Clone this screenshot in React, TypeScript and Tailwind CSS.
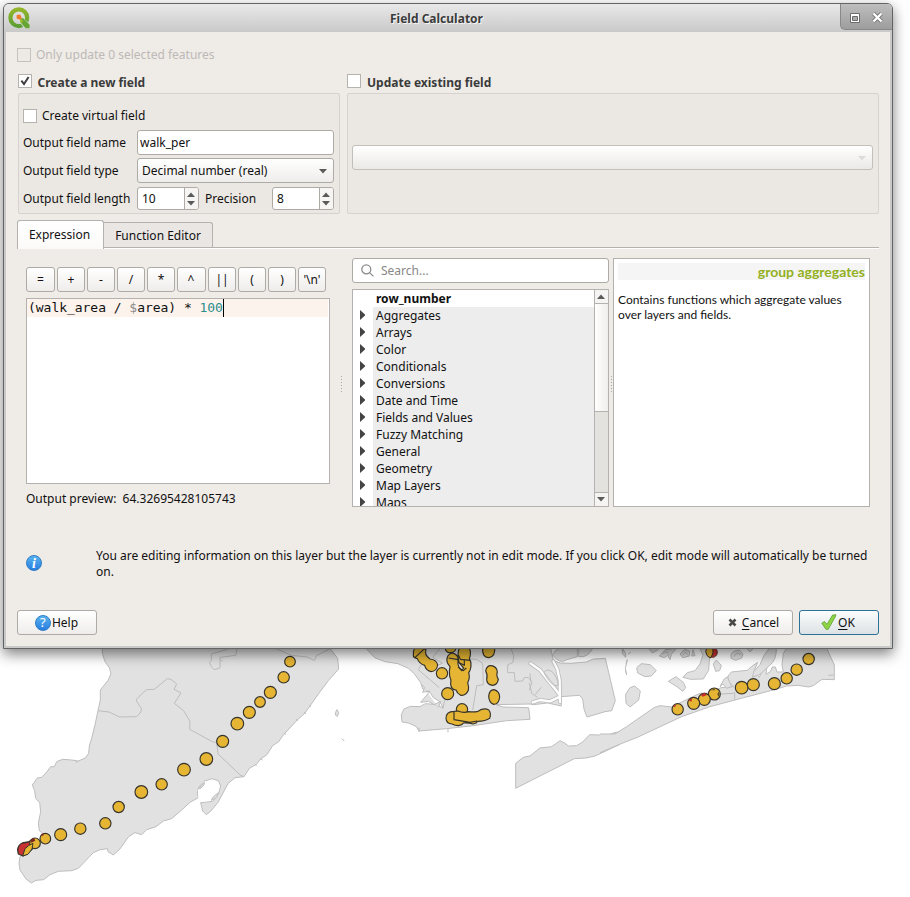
import React from 'react';

const OPERATORS = ['=', '+', '-', '/', '*', '^', '||', '(', ')', "'\\n'"];

const GROUPS = [
  'Aggregates', 'Arrays', 'Color', 'Conditionals', 'Conversions', 'Date and Time',
  'Fields and Values', 'Fuzzy Matching', 'General', 'Geometry', 'Map Layers', 'Maps',
];

const BUTTON = 'flex items-center justify-center rounded-[3px] border border-[#aeaaa6] bg-linear-to-b from-white to-[#efedeb]';

type Dot = [number, number, number];

const WEST_DOTS: Dot[] = [
  [870, 65, 16], [851, 112, 17], [811, 157, 18], [780, 186, 16], [748, 217, 18], [712, 251, 19],
  [668, 304, 18], [619, 357, 19], [552, 389, 19], [485, 433, 17], [424, 456, 19], [356, 501, 17],
  [316, 550, 17], [241, 566, 17], [182, 584, 18], [136, 596, 16], [105, 610, 16],
];

const EAST_DOTS: Dot[] = [
  [626, 57, 17], [590, 89, 17], [560, 115, 17], [523, 131, 18], [425, 143, 19], [460, 134, 18],
  [343, 162, 18], [313, 178, 18], [281, 190, 18], [233, 208, 17],
];

const CHANNELS = 'M571 70 600 90 625 122 648 150 659 166M655 172 630 184 600 180 578 187M640 64 652 88 659 120 660 186';

function Dots({ items }: { items: Dot[] }) {
  return (
    <g fill="#e5b533" stroke="#35332b" strokeWidth="3.5">
      {items.map(([cx, cy, r]) => <circle key={`${cx}-${cy}`} cx={cx} cy={cy} r={r} />)}
    </g>
  );
}

function MapCanvas() {
  return (
    <svg className="absolute inset-0" width="910" height="897" viewBox="0 0 910 897" strokeLinejoin="round">
      <g transform="translate(0 640) scale(.33333)" fill="#e1e1e1" stroke="#bdbdbd" strokeWidth="3">
        <path d="M307 0V40L315 65 328 83 333 100 325 120 301 150V180L294 212 285 255 275 295 268 318 266 340 256 354 235 363 215 360 188 358 170 365 163 380 152 380 140 396 125 412 112 414 97 435 104 452 107 475 119 488 122 515 115 550 118 572 125 578 136 596 105 612 60 650 57 670 60 690 78 717 94 729 108 721 131 719 150 704 175 694 215 692 235 685 258 661 280 638 300 629 322 626 324 635 340 645 358 629 386 590 405 578 425 584 440 569 468 560 490 543 515 536 545 510 570 487 595 473 592 460 596 442 612 424 635 416 655 422 662 438 656 460 638 484 602 488 608 513 619 524 632 514 654 487 684 431 705 413 732 410 748 385 768 374 783 356 800 345 818 317 836 305 850 285 892 240 915 219 930 198 958 158 985 122 1016 87 1013 55 990 25 970 0Z" />
        <path fill="white" stroke="none" d="M595 475 594 450 614 425 640 419 659 438 650 465 636 482 602 486Z" />
        <path d="M597 446 604 436 614 428 610 438 600 446ZM634 481 640 470 655 458 650 472Z" />
        <path fill="none" d="M294 212 327 216 359 231 410 230 423 216 424 205 410 184 409 178 427 160 440 149 463 148 502 116 513 118 530 132 522 148 543 159 523 190 551 212 570 244 569 268 637 305 650 308 654 342 706 391 720 405 732 410M711 27 707 46 660 52 660 84 642 89 634 80 628 67 634 62 634 42 682 28M828 26 874 46 922 51 943 62 949 47 990 26" />
        <path d="M1006 218 1011 209 1016 218 1012 229 1007 226ZM1026 296 1029 300 1033 302M663 60 668 64M888 238 894 241M928 197 932 200M913 217 918 221M853 278 857 284M782 355 787 361M766 372 770 377M226 363 232 367 237 362" />
        <path fill="#c93232" stroke="#35332b" strokeWidth="4" d="M53 630Q54 615 67 609L84 606 104 596 110 615 80 642 69 648 55 642Z" />
      </g>
      <g transform="translate(0 640) scale(.33333)">
        <Dots items={WEST_DOTS} />
        <path d="M68 648 75 626 87 616 99 610 96 627 84 643Z" fill="#e5b533" stroke="#35332b" strokeWidth="3" />
        <path d="M91 600 102 593 106 602 94 608ZM120 586 132 579 130 587Z" fill="#7d281f" />
      </g>

      <g transform="translate(340 640) scale(.33333)" fill="#e1e1e1" stroke="#bdbdbd" strokeWidth="3">
        <path d="M55 0 104 53 135 65 174 71 205 85 223 101 242 128 248 147 270 157 280 173 300 185 309 203 282 193 256 191 240 200 211 199 192 207 184 224 186 246 205 249 228 259 237 273 320 266 400 257 500 242 570 238 566 203 488 201 468 194 570 192 580 194 623 189 664 198 663 170 690 168 719 166 728 177 732 207 741 231 795 215 815 212 826 182 796 55 760 57 739 66 690 70 661 69 640 62 632 25 620 0Z" />
        <path d={CHANNELS} fill="none" stroke="#bdbdbd" strokeWidth="12" strokeLinecap="round" />
        <path d={CHANNELS} fill="none" stroke="white" strokeWidth="7" strokeLinecap="round" />
        <path d="M638 45Q643 29 661 25H712V50L680 59Q660 74 638 45ZM716 25V50Q744 54 758 25" />
        <path fill="none" d="M612 98Q620 82 640 98 660 128 653 138 632 138 612 98ZM299 27 278 52 308 70 280 80M244 74 235 89 298 143M334 141 315 178 308 207M398 210 410 137 430 134 428 70 410 58 391 57M513 25 521 47 519 67 503 75 503 98 523 98 525 124 548 123 553 112 565 113 576 125 568 151M570 100 572 125M568 128 575 160 592 172M604 142 586 163M237 263V276M324 266V277" />
        <path d="M244 133 254 142 248 157 270 153 258 168 242 187 265 184 282 194 302 184 295 202" />
        <path d="M840 275 820 279 804 286 749 284 728 306 710 317 685 318 675 310 660 302 635 320 600 324 570 348 550 352 527 370V445L703 356 738 354 765 348 840 313" />
      </g>
      <g transform="translate(340 640) scale(.33333)" fill="#e5b533" stroke="#35332b" strokeWidth="3.5">
        <path d="M220 45Q217 20 240 20L258 29Q252 45 270 57 290 59 293 75 290 94 273 95 257 90 254 76 238 72 232 56 219 53 220 45ZM225 53 251 28M315 20Q316 39 332 38 348 37 349 20ZM428 20Q425 53 447 53 467 50 464 20Z" />
        <path d="M321 55Q325 38 341 40 356 45 354 62 352 81 365 92L371 84 357 68Q351 39 358 25H388Q395 40 388 56 395 67 393 78 391 93 386 98 391 113 383 128 387 140 385 151 378 168 362 166 351 160 348 150 334 149 332 133 335 120 329 109 327 91 330 79 319 69 321 55Z" />
        <path fill="none" d="M326 54 354 59M355 45 361 58 391 61M358 68 373 76 373 61M354 81 370 92 379 84" />
        <circle cx="306" cy="100" r="17" /><circle cx="323" cy="161" r="18" />
        <path d="M437 93Q440 76 454 77 471 80 472 96 468 106 475 118 472 135 457 136 440 134 440 118 444 106 437 93ZM446 169Q448 149 462 149 478 153 479 171 477 193 461 193 447 189 446 169Z" />
        <circle cx="366" cy="208" r="17" />
        <path d="M342 214Q318 214 318 235 319 252 336 252 345 257 355 257 367 255 370 249 387 248 399 252 410 250 413 244 437 244 449 235 455 218 445 209 431 203 414 214 402 217 385 215 370 220 354 213ZM342 214V239L390 247 411 243" />
      </g>

      <g transform="translate(600 640) scale(.33333)" fill="#e1e1e1" stroke="#bdbdbd" strokeWidth="3">
        <path d="M0 282H45L80 260 162 203 180 197 214 201 247 185 300 160 330 159 363 143 401 140 385 126 384 108 394 96 442 91 454 80 473 67 462 94 478 112 494 73 488 65 500 37 512 25H680L703 75V119L666 118 640 137 626 141 594 136 560 138 520 150 420 176 330 200 245 230 112 292 66 310 0 338" />
        <path d="M110 83 124 71 151 74 169 92 154 108 135 110 113 99ZM77 163 90 143 104 138 121 153 116 180 90 201 78 190ZM205 124 228 110 250 127 257 143 248 154 231 140ZM249 112 262 98 285 92 300 72 309 45 300 27H330L326 91 310 117 272 118ZM340 72 349 60 364 76 359 92 347 94ZM393 43Q400 30 419 31L429 43 425 54 407 61 393 55ZM240 42 254 28 269 33 268 48 248 53ZM178 48 196 29 230 25 214 43 210 59 203 46 193 53ZM275 48 279 29 285 47ZM146 25 157 39 171 31 178 25ZM67 25 77 41 77 52 67 40ZM78 71 82 59 76 85 80 105 76 91M84 42 92 37M402 50 410 39 424 44M187 42 200 35 206 45M248 46 256 36 263 44M440 25 450 36 460 25" />
        <path fill="white" d="M500 86 523 25H560L550 40 546 75 550 96 531 96 526 81 517 81 512 94 498 103Z" />
        <path d="M462 94 480 74 492 46 508 25H529Q530 60 509 76L480 103 457 112ZM360 140 373 116 382 111 395 140 380 145 369 132ZM404 155V178M363 162 401 160M685 106 701 105" />
        <circle cx="337" cy="37" r="15" fill="#c93232" stroke="#5e3029" />
        <path fill="#e5b533" stroke="#35332b" d="M317 34Q320 20 335 22 345 36 331 54 319 50 317 34Z" />
      </g>
      <g transform="translate(600 640) scale(.33333)">
        <Dots items={EAST_DOTS} />
        <path d="M265 181 277 175 274 185ZM303 165 313 158 321 165 308 170ZM220 198 229 193 225 202Z" fill="#c52c2c" />
        <path d="M332 151 343 146 346 151ZM355 155Q363 163 355 170L352 162Z" fill="#625426" />
      </g>
    </svg>
  );
}

function QgisLogo() {
  return (
    <svg width="22" height="22" viewBox="0 0 22 22">
      <defs>
        <linearGradient id="ring" x1="0" y1="0" x2="0" y2="1">
          <stop offset="0" stopColor="#93b52a" />
          <stop offset="1" stopColor="#5c9f35" />
        </linearGradient>
      </defs>
      <circle cx="10.8" cy="10.7" r="8.4" fill="none" stroke="url(#ring)" strokeWidth="4.2" />
      <path d="M9.5 12.5 12.5 9.5 22 16.5V21.2H16.3Z" fill="#dfe0dc" />
      <path d="M12.2 11.2H15.2L21.6 17.5V21.2H17.6L12.2 15Z" fill="#66a534" />
      <path d="M12.2 11.2 15.2 14 13.6 16 12.2 14.6Z" fill="#a5bd2c" />
      <path d="M8.6 8 12.2 7.6 13.8 11 11.6 12.8 8.6 11.6Z" fill="#ee7b2d" />
    </svg>
  );
}

function Triangle({ className = '', up = false }: { className?: string; up?: boolean }) {
  return (
    <svg className={className} width="8" height="5" viewBox="0 0 8 5">
      <path fill="currentColor" d={up ? 'M0 5 4 .5 8 5Z' : 'M0 0H8L4 4.5Z'} />
    </svg>
  );
}

function Checkbox({ checked = false, disabled = false }: { checked?: boolean; disabled?: boolean }) {
  return (
    <span className={`flex size-3.5 shrink-0 items-center justify-center border ${disabled ? 'border-[#c6c2be] bg-[#edeae6]' : 'border-[#b6b2ae] bg-white'}`}>
      {checked && (
        <svg width="10" height="10" viewBox="0 0 10 10">
          <path d="M1.4 4.6 4 8 8.6 1" fill="none" stroke="#404040" strokeWidth="2" />
        </svg>
      )}
    </span>
  );
}

function SpinBox({ value }: { value: string }) {
  return (
    <div className="flex h-[23px] w-[62px] overflow-hidden rounded-[3px] border border-[#aeaaa6] bg-white">
      <span className="flex flex-1 items-center pl-1">{value}</span>
      <span className="flex w-3.5 flex-col items-center justify-center gap-1 border-l border-[#aeaaa6] bg-[#f6f5f3] pr-px text-[#5a5a5a]">
        <Triangle up className="shrink-0" /><Triangle className="shrink-0" />
      </span>
    </div>
  );
}

function Grip() {
  return <div className="mt-[2px] h-4 w-px bg-[repeating-linear-gradient(to_bottom,#aaa7a3_0_1px,transparent_1px_3px)]" />;
}

function NewFieldGroup() {
  return (
    <section className="w-[322px]">
      <div className="flex h-[19px] gap-[5.5px]">
        <Checkbox checked />
        <h2 className="leading-[18px] font-bold text-[#3b3b3b]">Create a new field</h2>
      </div>
      <div className="flex h-[121px] flex-col rounded-[2px] border border-[#d6d2cd] bg-[#ebe8e3] pt-3 pr-[5px] pl-1">
        <label className="mt-px flex h-[18px] items-center gap-[5px]"><Checkbox />Create virtual field</label>
        <div className="mt-[5px] flex h-[25px] items-center">
          <span className="w-[114px]">Output field name</span>
          <div className="flex h-[25px] flex-1 items-center rounded-[3px] border border-[#aeaaa6] bg-white pl-0.5">walk_per</div>
        </div>
        <div className="mt-[3px] flex h-[25px] items-center">
          <span className="w-[114px]">Output field type</span>
          <div className="flex h-[25px] flex-1 items-center justify-between rounded-[3px] border border-[#aeaaa6] bg-linear-to-b from-white to-[#efedeb] pr-1.5 pl-1">
            Decimal number (real)<Triangle className="mt-px text-[#5a5a5a]" />
          </div>
        </div>
        <div className="mt-1 flex h-[23px] items-center">
          <span className="w-[114px]">Output field length</span>
          <SpinBox value="10" />
          <span className="ml-1.5 flex-1">Precision</span>
          <SpinBox value="8" />
        </div>
      </div>
    </section>
  );
}

function UpdateFieldGroup() {
  return (
    <section className="w-[532px]">
      <div className="flex h-[19px] gap-1.5">
        <Checkbox />
        <h2 className="leading-[18px] font-bold text-[#3b3b3b]">Update existing field</h2>
      </div>
      <div className="flex h-[121px] items-center rounded-[2px] border border-[#d6d2cd] bg-[#ebe8e3] pt-2 pr-[5px] pl-1">
        <div className="flex h-[25px] flex-1 items-center justify-end rounded-[3px] border border-[#c3bfbb] bg-linear-to-b from-white to-[#ebe9e6] pr-1.5">
          <Triangle className="mt-px text-[#dedcda]" />
        </div>
      </div>
    </section>
  );
}

function ExpressionEditor() {
  return (
    <div className="w-[304px]">
      <div className="mt-[9px] flex h-[25px] w-[300px] gap-0.5">
        {OPERATORS.map((op, i) => (
          <button key={op} className={`${BUTTON} shrink-0 ${i === 0 || i === 5 ? 'w-[29px]' : 'w-7'} ${i === 5 ? 'pr-px' : ''}`}>{op}</button>
        ))}
      </div>
      <div className="mt-1.5 h-[186px] border border-[#b4b1ae] bg-white">
        <div className="mr-px flex h-[18px] items-center bg-[#fcf3ed] pl-px font-['DejaVu_Sans_Mono',monospace] text-[13px] tracking-[-0.03px] whitespace-pre">
          (walk_area / <span className="text-[#8b8b8b]">$</span>area) * <span className="text-[#2b8d8b]">100</span>
          <span className="h-[18px] w-px bg-black" />
        </div>
      </div>
      <p className="mt-1.5 leading-[17px] whitespace-pre">Output preview:  64.32695428105743</p>
    </div>
  );
}

function FunctionTree() {
  return (
    <div className="w-[257px]">
      <div className="flex h-[25px] items-center rounded-[3px] border border-[#aeaaa6] bg-white pl-2 text-[#888]">
        <svg className="-mt-px" width="13" height="13" viewBox="0 0 13 13" fill="none" stroke="#8c8c8c" strokeWidth="1.3">
          <circle cx="5.3" cy="5.3" r="4.5" /><path d="M8.6 8.6 12.4 12.4" />
        </svg>
        <span className="ml-[7px]">Search...</span>
      </div>
      <div className="mt-1.5 flex h-[218px] overflow-hidden border border-[#b4b1ae] bg-white">
        <div className="flex-1">
          <div className="h-[17px] pl-[23px] leading-[17px] font-bold">row_number</div>
          {GROUPS.map((name) => (
            <div key={name} className="flex h-[17px] items-center">
              <svg className="-mt-px ml-[7px]" width="5" height="10" viewBox="0 0 5 10"><path fill="#444" d="M0 0 5 4.6V5.4L0 10Z" /></svg>
              <span className="ml-2 h-[17px] flex-1 bg-[#ededed] pl-[3px] leading-[17px]">{name}</span>
            </div>
          ))}
        </div>
        <div className="flex w-3.5 flex-col border-l border-[#b4b1ae] bg-[#e4e2de] text-[#5a5a5a]">
          <div className="flex h-[13px] items-center justify-center bg-[#f5f4f2] pr-px"><Triangle up /></div>
          <div className="h-[109px] border-y border-[#b4b1ae] bg-linear-to-r from-white to-[#f0eeec]" />
          <div className="mt-auto flex h-3.5 items-center justify-center border-t border-[#b4b1ae] bg-[#f5f4f2] pr-px"><Triangle /></div>
        </div>
      </div>
    </div>
  );
}

function HelpPanel() {
  return (
    <div className="h-[249px] w-[257px] border border-[#b4b1ae] bg-white px-1 pt-1 font-[Lato,sans-serif] text-[12px]">
      <h3 className="h-[17px] bg-[#f5f5f5] text-right text-[14px] leading-[18px] font-bold text-[#93b023]">group aggregates</h3>
      <p className="mt-3 leading-[15px]">Contains functions which aggregate values<br />over layers and fields.</p>
    </div>
  );
}

function RoundIcon({ glyph, italic = false }: { glyph: string; italic?: boolean }) {
  return (
    <span className={`flex size-4 items-center justify-center rounded-full border border-[#2c7cc4] bg-linear-to-b from-[#59b3ee] to-[#2a7de1] text-white ${italic ? "font-['Liberation_Serif',serif] text-[14px] font-bold italic" : 'text-[13px]'}`}>
      {glyph}
    </span>
  );
}

export default function App() {
  return (
    <main className="relative h-[897px] w-[910px] overflow-hidden bg-white pt-[3px] pl-[3px] font-['Noto_Sans',sans-serif] text-[12px] text-[#111]">
      <MapCanvas />
      <div className="relative flex h-[646px] w-[890px] flex-col overflow-visible rounded-t-[6px] border border-[#626466] bg-[#c9c9c9] shadow-[0_5px_14px_rgba(0,0,0,0.5)]">
        <header className="flex h-7 shrink-0 rounded-t-[5px] bg-linear-to-b from-[#e9e9e9] to-[#c9c9c9]">
          <div className="flex w-[30px] items-center pl-1"><QgisLogo /></div>
          <h1 className="flex flex-1 items-center justify-center pt-px pr-px font-bold text-[#3c3c3c] [text-shadow:1px_1px_0_#f5f5f5]">Field Calculator</h1>
          <div className="flex h-[26px] w-[52px] items-center gap-3 rounded-tr-[5px] rounded-bl-[5px] border-b border-l border-[#888] bg-linear-to-b from-[#bebebe] to-[#9d9d9d] pt-0.5 pl-[9px]">
            <svg width="10" height="10" viewBox="0 0 10 10"><path d="M.5.5H9.5V9.5H.5Z" fill="#fff" stroke="#6b6b6b" /><path d="M2.5 3.5H7.5V7.5H2.5Z" fill="#aaa" stroke="#6b6b6b" /></svg>
            <svg width="11" height="11" viewBox="0 0 11 11" fill="none"><path d="M1.5 1.5 9.5 9.5M9.5 1.5 1.5 9.5" stroke="#777" strokeWidth="4" /><path d="M1.5 1.5 9.5 9.5M9.5 1.5 1.5 9.5" stroke="#fff" strokeWidth="2.4" /></svg>
          </div>
        </header>

        <div className="mx-0.5 mb-0.5 flex flex-1 flex-col bg-[#efebe7] px-[11px] pt-3.5">
          <label className="flex h-[17px] items-center gap-[5px] text-[#bcb9b6]"><Checkbox disabled />Only update 0 selected features</label>
          <div className="mt-[11px] flex gap-[7px] pl-px">
            <NewFieldGroup />
            <UpdateFieldGroup />
          </div>

          <nav className="mt-1.5 flex h-[29px] w-[862px] items-end">
            <span className="flex h-[29px] w-[87px] items-center justify-center rounded-t-[3px] border border-b-0 border-[#b4b1ae] bg-linear-to-b from-white to-[#fbfaf9] pr-0.5">Expression</span>
            <div className="flex h-[27px] flex-1 items-start border-b border-white">
              <div className="flex h-[26px] flex-1 border-b border-[#b4b1ae]">
                <span className="flex w-[109px] items-center justify-center rounded-tr-[3px] border-t border-r border-[#b4b1ae] bg-[#e9e6e3] pt-0.5">Function Editor</span>
              </div>
            </div>
          </nav>

          <div className="mt-[9px] flex h-[249px] pl-[9px]">
            <ExpressionEditor />
            <div className="flex w-[22px] items-center justify-center"><Grip /></div>
            <FunctionTree />
            <div className="flex w-1 items-center justify-center"><Grip /></div>
            <HelpPanel />
          </div>

          <div className="mt-10 flex h-8 items-center pl-[9px]">
            <RoundIcon glyph="i" italic />
            <p className="mt-0.5 ml-[54px] leading-4 tracking-[-0.007px]">You are editing information on this layer but the layer is currently not in edit mode. If you click OK, edit mode will automatically be turned<br />on.</p>
          </div>

          <footer className="mt-[31px] flex h-[25px] w-[862px] gap-1.5">
            <button className={`${BUTTON} w-20 gap-px pr-px`}><RoundIcon glyph="?" />Help</button>
            <span className="flex-1" />
            <button className={`${BUTTON} w-20 gap-[5px] pl-px`}>
              <svg width="9" height="9" viewBox="0 0 9 9"><path d="M1.5 1.5 7.5 7.5M7.5 1.5 1.5 7.5" stroke="#4a4a4a" strokeWidth="2.6" /></svg>
              <span><u className="underline-offset-2">C</u>ancel</span>
            </button>
            <button className="flex w-20 items-center justify-center rounded-[3px] border border-[#2c7196] bg-linear-to-b from-[#fbfcfc] to-[#dce2e5] pr-0.5">
              <svg className="-mt-px mr-px" width="16" height="16" viewBox="0 0 16 16"><path d="M.8 9.2 3.5 7.5 6 10.4 11.6 1 15 .8 14.2 3 7.2 15.3H5Z" fill="#8ed544" stroke="#5a9e35" strokeWidth=".8" /></svg>
              <span><u className="underline-offset-2">O</u>K</span>
            </button>
          </footer>
        </div>
      </div>
    </main>
  );
}
